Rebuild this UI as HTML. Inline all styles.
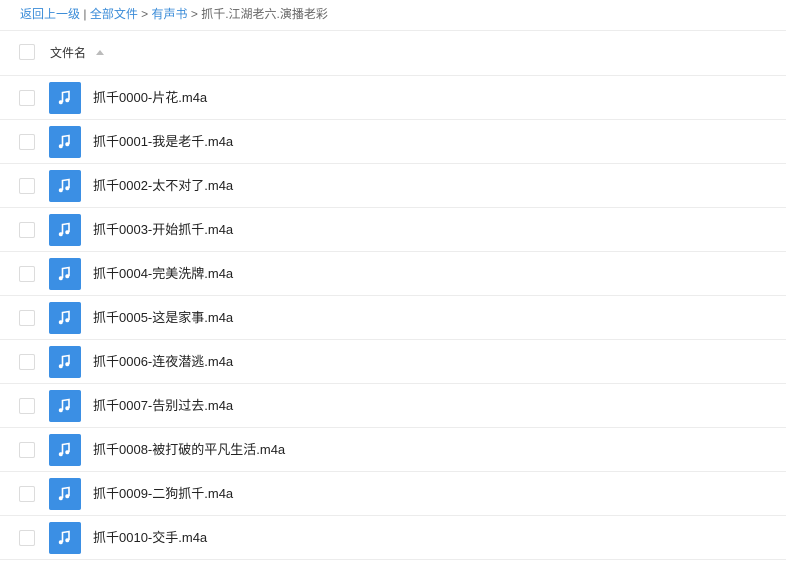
<!DOCTYPE html>
<html><head><meta charset="utf-8"><style>
body{margin:0;width:786px;height:566px;background:#fff;font-family:"Liberation Sans","Noto Sans CJK SC",sans-serif;overflow:hidden;position:relative}
.bc{position:absolute;left:20px;top:6px;font-size:12px;color:#666;line-height:16px}
.bc a{color:#3b8cd8;text-decoration:none}
.line{position:absolute;left:0;width:786px;height:1px;background:#ececec}
.cb{position:absolute;left:19px;width:14px;height:14px;border:1px solid #dcdcdc;border-radius:2px;background:#fff}
.hd{position:absolute;left:50px;top:45px;font-size:12px;color:#333;line-height:16px}
.tri{position:absolute;left:96px;top:50px;width:0;height:0;border-left:4px solid transparent;border-right:4px solid transparent;border-bottom:5px solid #bbb}
.row{position:absolute;left:0;width:786px;height:44px}
.ic{position:absolute;left:49px;top:6px;width:32px;height:32px;background:#3b8fe4;border-radius:2px}
.nm{position:absolute;left:93px;top:14px;font-size:13px;color:#222;line-height:16px}
</style></head><body>
<div class="bc"><a>返回上一级</a> | <a>全部文件</a> &gt; <a>有声书</a> &gt; 抓千.江湖老六.演播老彩</div>
<div class="line" style="top:30px"></div>
<div class="cb" style="top:44px"></div>
<div class="hd">文件名</div><div class="tri"></div>
<div class="line" style="top:75px"></div>
<div id="rows"></div>
<script>
var n=["片花","我是老千","太不对了","开始抓千","完美洗牌","这是家事","连夜潜逃","告别过去","被打破的平凡生活","二狗抓千","交手"];
var h="";
for(var i=0;i<11;i++){var t=76+i*44;var id=("000"+i).slice(-4);
h+='<div class="row" style="top:'+t+'px"><div class="cb" style="top:14px"></div><div class="ic"><svg width="32" height="32" viewBox="0 0 32 32"><path d="M13.5 20V10.5L20 9.5V18" stroke="#fff" stroke-width="1.6" fill="none"/><circle cx="11.8" cy="20.3" r="2" fill="#fff"/><circle cx="18.3" cy="18.3" r="2" fill="#fff"/></svg></div><div class="nm">抓千'+id+'-'+n[i]+'.m4a</div></div><div class="line" style="top:'+(t+43)+'px"></div>';}
document.getElementById("rows").innerHTML=h;
</script>
</body></html>
